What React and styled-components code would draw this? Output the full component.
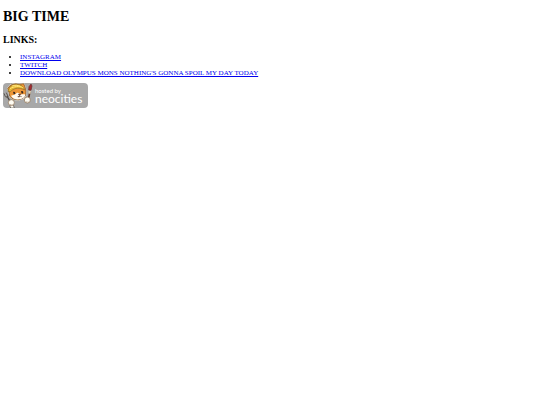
import React from 'react';
import styled, { createGlobalStyle } from 'styled-components';

const links = [
    { name: 'INSTAGRAM', url: '#instagram' },
    { name: 'TWITCH', url: '#twitch' },
    { name: "DOWNLOAD OLYMPUS MONS NOTHING'S GONNA SPOIL MY DAY TODAY", url: '#download' },
];

function Cat() {
    return (
        <svg width="30" height="25" viewBox="0 0 90 75" aria-hidden="true">
            {/* fork */}
            <path d="M12 39l10 18" stroke="#4c4540" strokeWidth="4" />
            <path d="M3 31l4 10 6 2M10 29l5 11-2 4" stroke="#5b5550" strokeWidth="3" fill="none" />
            <path d="M20 67l10-3 4 11H23z" fill="#fffdf4" stroke="#4c4540" strokeWidth="2" />
            {/* head */}
            <path d="M19 31L14 16l9-10 14-4 12 2 13-2 4 10 3 12-1 13-8 9-14 5-16-3-10-8z" fill="#ee9636" stroke="#fff5df" strokeWidth="4" strokeLinejoin="round" />
            <path d="M19 31L14 16l9-10 14-4 12 2 13-2 4 10 3 12-1 13-8 9-14 5-16-3-10-8z" fill="#ee9636" stroke="#604026" strokeWidth="2" strokeLinejoin="round" />
            {/* bandana */}
            <path d="M15 25c2-11 10-21 25-21 13 0 22 6 25 17l-7-3c-13-5-26-2-36 8z" fill="#e5b632" stroke="#8b692a" strokeWidth="2" />
            <path d="M21 17c12-7 27-9 40-3M27 9c8-3 17-3 25 1" stroke="#ffe376" strokeWidth="3" fill="none" />
            {/* face */}
            <path d="M24 38c8-2 13-3 17-8 5-3 9 2 11 5 7-1 12-2 15 0-1 8-8 12-17 14-13 2-22-3-26-11z" fill="#fffaf0" />
            <path d="M30 26l6 1 1 6-5 1zM54 24l6 1 1 6-5 1z" fill="#38281f" />
            <path d="M46 34l7-1-3 4zM50 37l-1 5-5-1M50 39l6 2" fill="#634034" stroke="#634034" strokeWidth="2" />
            {/* brush */}
            <path d="M81 25l-5 24" stroke="#663b28" strokeWidth="5" />
            <path d="M77 23l7 1-2 9-6-2z" fill="#ded2b4" />
            <path d="M84 3l3 6-3 13-7-1 1-10z" fill="#a62c30" stroke="#682829" strokeWidth="2" />
            {/* paws */}
            <circle cx="25" cy="59" r="9" fill="#fffdf4" stroke="#8b6b4c" strokeWidth="2" />
            <circle cx="73" cy="51" r="9" fill="#fffdf4" stroke="#8b6b4c" strokeWidth="2" />
            <path d="M22 63v4M27 63v4M70 55v3M75 55v3" stroke="#a8927d" strokeWidth="2" />
        </svg>
    );
}

function App() {
    return (
        <>
            <GlobalStyle />
            <PageStyled>
                <Title>BIG TIME</Title>
                <Subtitle>LINKS:</Subtitle>
                <LinkList>
                    {links.map((link) => (
                        <li key={link.name}>
                            <a href={link.url}>{link.name}</a>
                        </li>
                    ))}
                </LinkList>
                <Badge href="#neocities">
                    <Cat />
                    <BadgeText>
                        <Hosted>hosted by</Hosted>
                        <Brand>neocities</Brand>
                    </BadgeText>
                </Badge>
            </PageStyled>
        </>
    );
}

const GlobalStyle = createGlobalStyle`
    body {
        margin: 0;
        background: #fff;
        color: #000;
        font-family: "Liberation Serif", "Times New Roman", serif;
    }
`;

const PageStyled = styled.main`
    padding: 9px 3px;
`;

const Title = styled.h1`
    margin: 0 0 9px;
    font-size: 14px;
    line-height: 16px;
`;

const Subtitle = styled.h2`
    margin: 0 0 7px;
    font-size: 10px;
    line-height: 12px;
`;

const LinkList = styled.ul`
    margin: 0 0 6px;
    padding-left: 17px;
    font-size: 7px;
    line-height: 8px;

    a {
        color: #0000ee;
    }
`;

const Badge = styled.a`
    display: inline-flex;
    vertical-align: top;
    padding-right: 6px;
    border-radius: 4px;
    background: #a8a8a8;
    color: #fff;
    font-family: Lato, "Open Sans", sans-serif;
    text-decoration: none;
`;

const BadgeText = styled.span`
    display: flex;
    flex-direction: column;
    padding: 4px 0 0 2px;
`;

const Hosted = styled.span`
    font-size: 6px;
    line-height: 7px;
`;

const Brand = styled.span`
    font-size: 12px;
    line-height: 10px;
`;

export default App;
